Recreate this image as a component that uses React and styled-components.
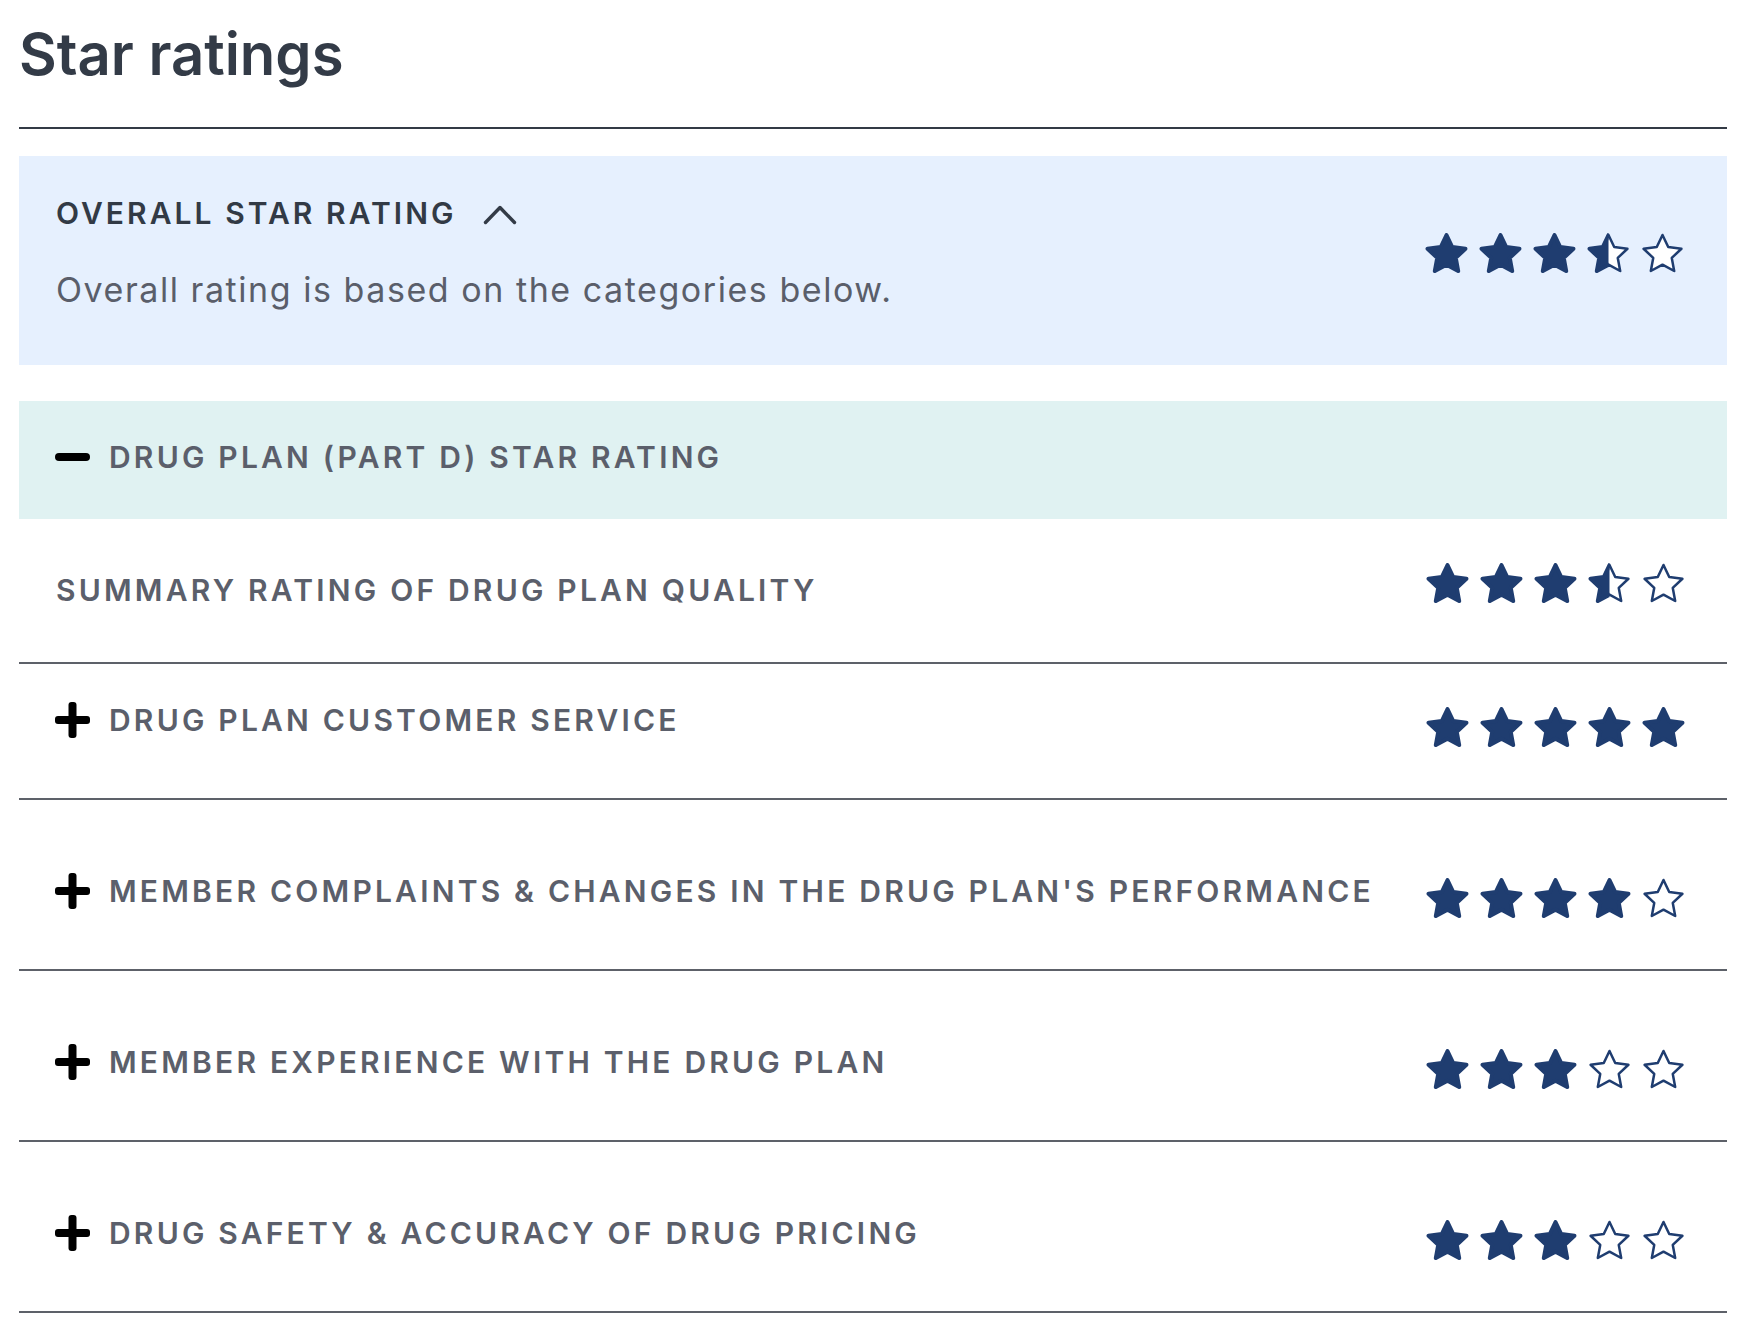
import React, { useId } from "react";
import styled, { createGlobalStyle } from "styled-components";

const GlobalStyle = createGlobalStyle`
  body {
    margin: 0;
    background: #ffffff;
    font-family: "Inter", "Liberation Sans", sans-serif;
  }
`;

const NAVY = "#1f3d70";
const STAR_POINTS =
  "21.5,2 27.23,14.01 40.43,15.75 30.77,24.91 33.2,38 21.5,31.65 9.8,38 12.23,24.91 2.57,15.75 15.77,14.01";

const Page = styled.div`
  margin: 0 31px 0 19px;
  padding-top: 19px;
`;

const Header = styled.div`
  padding-bottom: 38px;
  border-bottom: 2px solid #333a45;
`;

const Title = styled.h1`
  margin: 0;
  font-size: 58px;
  line-height: 70px;
  font-weight: 600;
  color: #333b47;
`;

const OverallBox = styled.section`
  margin-top: 27px;
  background: #e6f0fe;
  display: flex;
  justify-content: space-between;
  align-items: center;
  padding: 39px 43px 55px 37px;
`;

const OverallText = styled.div`
  display: flex;
  flex-direction: column;
  gap: 39px;
`;

const Label = styled.span`
  font-size: 30px;
  line-height: 36px;
  font-weight: 600;
  letter-spacing: ${(p) => (p.$dark ? 3.05 : 3.2)}px;
  text-transform: uppercase;
  color: ${(p) => (p.$dark ? "#323a45" : "#5b5f6b")};
  white-space: nowrap;
`;

const LabelRow = styled.div`
  display: flex;
  align-items: center;
  gap: ${(p) => p.$gap || 19}px;
`;

const Subtitle = styled.p`
  margin: 0;
  font-size: 34px;
  line-height: 40px;
  font-weight: 400;
  letter-spacing: 1.55px;
  color: #5a5e6a;
`;

const SectionBar = styled.div`
  margin-top: 36px;
  background: #e0f2f2;
  padding: 38px 43px 44px 36px;
  display: flex;
  align-items: center;
`;

const Row = styled.div`
  display: flex;
  justify-content: space-between;
  align-items: flex-start;
  padding: ${(p) => p.$top}px 42px ${(p) => p.$bottom}px ${(p) => p.$left}px;
  border-bottom: 2px solid #5d6169;
`;

const StarList = styled.div`
  display: flex;
  gap: 11px;
  flex-shrink: 0;
  margin-top: ${(p) => p.$shift || 0}px;
`;

const Chevron = styled.svg`
  margin-top: 2px;
`;

function Star({ fill }) {
  const id = useId();
  return (
    <svg width="43" height="40" viewBox="0 0 43 40">
      <defs>
        <clipPath id={id}>
          <rect x="0" y="0" width="21.5" height="40" />
        </clipPath>
      </defs>
      <polygon
        points={STAR_POINTS}
        fill={fill === 1 ? NAVY : "#ffffff"}
        stroke={NAVY}
        strokeWidth={fill === 1 ? 4 : 2.5}
        strokeLinejoin="round"
      />
      {fill === 0.5 && (
        <polygon
          points={STAR_POINTS}
          fill={NAVY}
          stroke={NAVY}
          strokeWidth="4"
          strokeLinejoin="round"
          clipPath={`url(#${id})`}
        />
      )}
    </svg>
  );
}

function Stars({ value, shift }) {
  const list = [0, 1, 2, 3, 4].map((i) =>
    value >= i + 1 ? 1 : value >= i + 0.5 ? 0.5 : 0
  );
  return (
    <StarList $shift={shift} aria-label={`${value} out of 5 stars`}>
      {list.map((f, i) => (
        <Star key={i} fill={f} />
      ))}
    </StarList>
  );
}

function PlusIcon() {
  return (
    <svg width="35" height="36" viewBox="0 0 35 36">
      <rect x="0" y="14" width="35" height="8" rx="3" fill="#000" />
      <rect x="13.5" y="0" width="8" height="36" rx="3" fill="#000" />
    </svg>
  );
}

function MinusIcon() {
  return (
    <svg width="35" height="36" viewBox="0 0 35 36">
      <rect x="0" y="14" width="35" height="8" rx="4" fill="#000" />
    </svg>
  );
}

const categories = [
  { name: "Drug plan customer service", rating: 5, top: 38 },
  { name: "Member complaints & changes in the drug plan's performance", rating: 4, top: 73 },
  { name: "Member experience with the drug plan", rating: 3, top: 73 },
  { name: "Drug safety & accuracy of drug pricing", rating: 3, top: 73 },
];

export default function App() {
  return (
    <>
      <GlobalStyle />
      <Page>
        <Header>
          <Title>Star ratings</Title>
        </Header>

        <OverallBox>
          <OverallText>
            <LabelRow $gap={26}>
              <Label $dark>Overall star rating</Label>
              <Chevron width="34" height="21" viewBox="0 0 34 21">
                <polyline
                  points="2.5,18.5 17,3.5 31.5,18.5"
                  fill="none"
                  stroke="#333b47"
                  strokeWidth="3.4"
                  strokeLinecap="round"
                  strokeLinejoin="round"
                />
              </Chevron>
            </LabelRow>
            <Subtitle>Overall rating is based on the categories below.</Subtitle>
          </OverallText>
          <Stars value={3.5} />
        </OverallBox>

        <SectionBar>
          <LabelRow>
            <MinusIcon />
            <Label>Drug plan (Part D) star rating</Label>
          </LabelRow>
        </SectionBar>

        <Row $top={53} $bottom={54} $left={37}>
          <Label>Summary rating of drug plan quality</Label>
          <Stars value={3.5} shift={-9} />
        </Row>

        {categories.map((c) => (
          <Row key={c.name} $top={c.top} $bottom={51} $left={36}>
            <LabelRow>
              <PlusIcon />
              <Label>{c.name}</Label>
            </LabelRow>
            <Stars value={c.rating} shift={5} />
          </Row>
        ))}
      </Page>
    </>
  );
}
